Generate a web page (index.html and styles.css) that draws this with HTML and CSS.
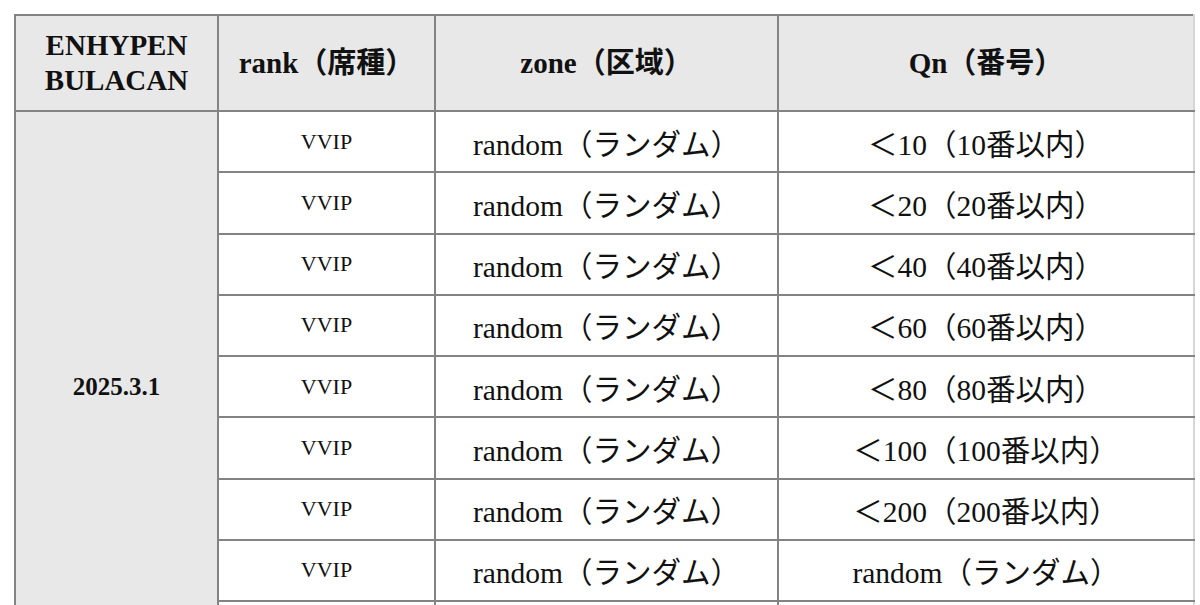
FILE: index.html
```html
<!DOCTYPE html>
<html lang="ja">
<head>
<meta charset="utf-8">
<title>ENHYPEN BULACAN</title>
<link rel="stylesheet" href="styles.css">
</head>
<body>
<table class="seats">
  <colgroup>
    <col class="c1"><col class="c2"><col class="c3"><col class="c4">
  </colgroup>
  <thead>
    <tr class="head">
      <th class="brand">ENHYPEN<br>BULACAN</th>
      <th>rank（席種）</th>
      <th>zone（区域）</th>
      <th>Qn（番号）</th>
    </tr>
  </thead>
  <tbody>
    <tr>
      <td class="date" rowspan="9">2025.3.1</td>
      <td class="rank">VVIP</td>
      <td class="val">random（ランダム）</td>
      <td class="val">＜10（10番以内）</td>
    </tr>
    <tr>
      <td class="rank">VVIP</td>
      <td class="val">random（ランダム）</td>
      <td class="val">＜20（20番以内）</td>
    </tr>
    <tr>
      <td class="rank">VVIP</td>
      <td class="val">random（ランダム）</td>
      <td class="val">＜40（40番以内）</td>
    </tr>
    <tr>
      <td class="rank">VVIP</td>
      <td class="val">random（ランダム）</td>
      <td class="val">＜60（60番以内）</td>
    </tr>
    <tr>
      <td class="rank">VVIP</td>
      <td class="val">random（ランダム）</td>
      <td class="val">＜80（80番以内）</td>
    </tr>
    <tr>
      <td class="rank">VVIP</td>
      <td class="val">random（ランダム）</td>
      <td class="val">＜100（100番以内）</td>
    </tr>
    <tr>
      <td class="rank">VVIP</td>
      <td class="val">random（ランダム）</td>
      <td class="val">＜200（200番以内）</td>
    </tr>
    <tr>
      <td class="rank">VVIP</td>
      <td class="val">random（ランダム）</td>
      <td class="val">random（ランダム）</td>
    </tr>
    <tr>
      <td class="rank"></td>
      <td class="val"></td>
      <td class="val"></td>
    </tr>
  </tbody>
</table>
</body>
</html>
```

FILE: styles.css
```css
html, body {
  margin: 0;
  padding: 0;
  background: #ffffff;
}

body {
  padding: 14px 0 0 14px;
  overflow: hidden;
  font-family: "Liberation Serif", "Noto Sans CJK JP", serif;
  color: #111111;
}

.seats {
  border-collapse: collapse;
  table-layout: fixed;
  width: 1179px;
  border: 2px solid #838383;
  border-right-color: #d6d6d6;
}

.c1 { width: 203px; }
.c2 { width: 217px; }
.c3 { width: 343px; }
.c4 { width: 416px; }

.seats th,
.seats td {
  border: 2px solid #838383;
  padding: 0;
  text-align: center;
  vertical-align: middle;
}

.seats th:last-child,
.seats td:last-child {
  border-right-color: #d6d6d6;
}

.head {
  height: 96px;
}

.head th {
  background: #e8e8e8;
  font-weight: bold;
  font-size: 29px;
  line-height: 35px;
}

.seats tbody tr {
  height: 61.25px;
}

.date {
  background: #e8e8e8;
  font-weight: bold;
  font-size: 25px;
}

.rank {
  font-size: 22px;
}

.val {
  font-size: 29.5px;
}
```
